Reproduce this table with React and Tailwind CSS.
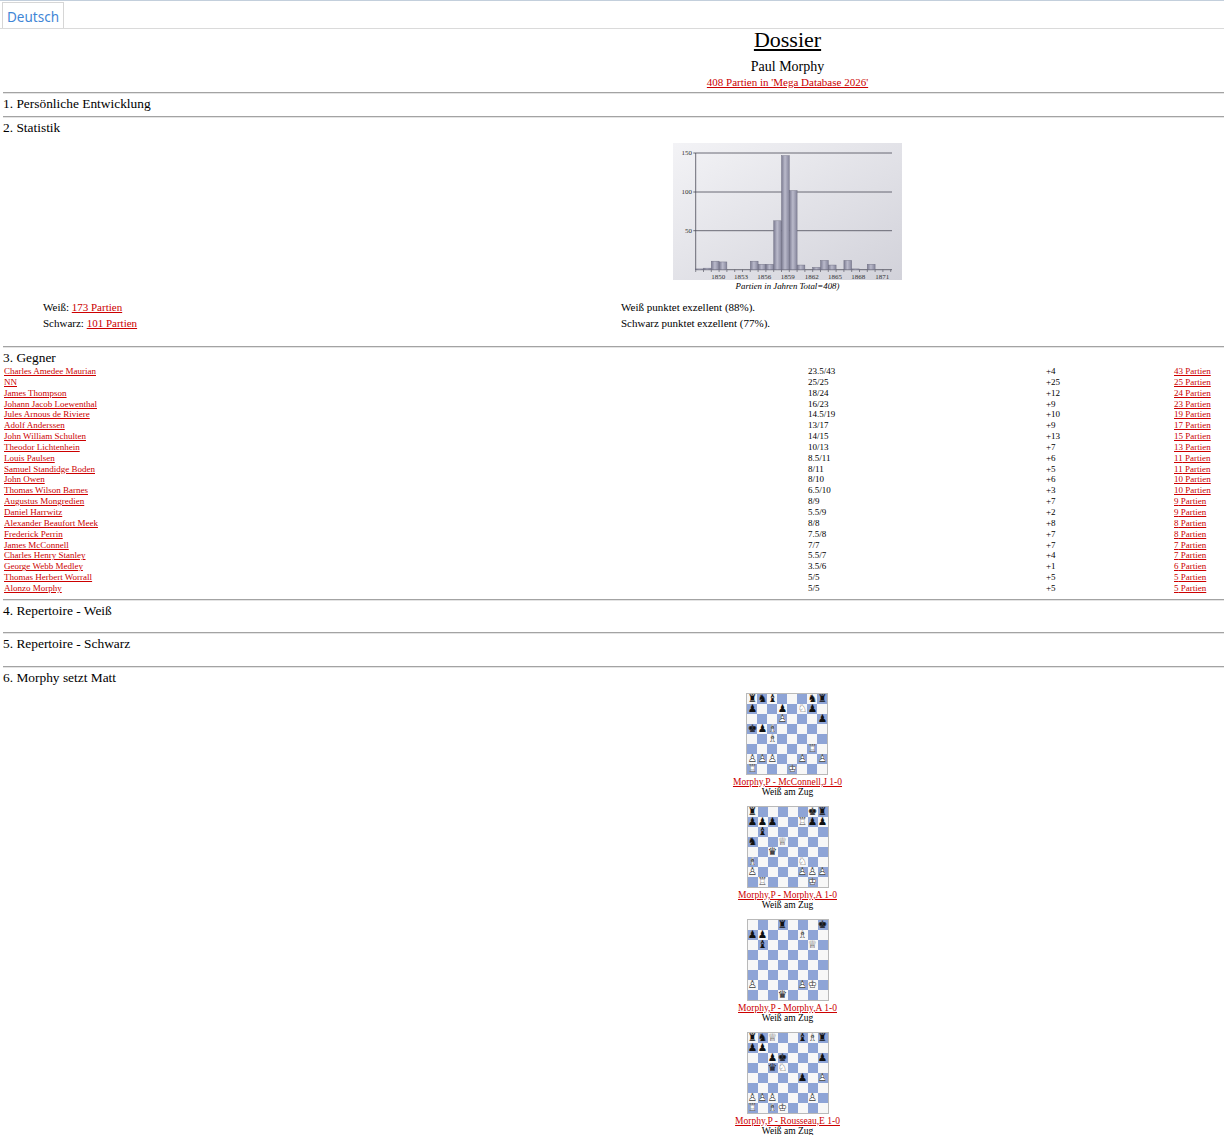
import React from 'react'

const serif = { fontFamily: '"Liberation Serif", "Times New Roman", serif' }

const opponents = [
  ['Charles Amedee Maurian', '23.5/43', '+4', 43],
  ['NN', '25/25', '+25', 25],
  ['James Thompson', '18/24', '+12', 24],
  ['Johann Jacob Loewenthal', '16/23', '+9', 23],
  ['Jules Arnous de Riviere', '14.5/19', '+10', 19],
  ['Adolf Anderssen', '13/17', '+9', 17],
  ['John William Schulten', '14/15', '+13', 15],
  ['Theodor Lichtenhein', '10/13', '+7', 13],
  ['Louis Paulsen', '8.5/11', '+6', 11],
  ['Samuel Standidge Boden', '8/11', '+5', 11],
  ['John Owen', '8/10', '+6', 10],
  ['Thomas Wilson Barnes', '6.5/10', '+3', 10],
  ['Augustus Mongredien', '8/9', '+7', 9],
  ['Daniel Harrwitz', '5.5/9', '+2', 9],
  ['Alexander Beaufort Meek', '8/8', '+8', 8],
  ['Frederick Perrin', '7.5/8', '+7', 8],
  ['James McConnell', '7/7', '+7', 7],
  ['Charles Henry Stanley', '5.5/7', '+4', 7],
  ['George Webb Medley', '3.5/6', '+1', 6],
  ['Thomas Herbert Worrall', '5/5', '+5', 5],
  ['Alonzo Morphy', '5/5', '+5', 5],
]

const puzzles = [
  { fen: 'rnb3nr/p2p1Np1/3P3p/kpB5/2B5/6R1/PPP2P1P/R3K3', game: 'Morphy,P - McConnell,J 1-0' },
  { fen: 'r5kr/ppp2Rpp/1b6/n2Q4/2q5/B4N2/P4PPP/1R4K1', game: 'Morphy,P - Morphy,A 1-0' },
  { fen: '3r3k/pp3B2/1b4Q1/8/8/8/P4PK1/3q4', game: 'Morphy,P - Morphy,A 1-0' },
  { fen: 'rnQ2bBr/pp6/2pk3p/2qN4/5p1P/8/PPP3P1/R1BK4', game: 'Morphy,P - Rousseau,E 1-0' },
]

// year slot index, number of games
const bars = [[0, 1], [1, 2], [2, 11], [3, 10], [7, 11], [8, 7], [9, 7], [10, 63], [11, 147], [12, 102], [13, 6], [15, 3], [16, 12], [17, 6], [19, 12], [20, 1], [22, 7]]
const years = [[45.3, '1850'], [68, '1853'], [91.3, '1856'], [114.7, '1859'], [138.7, '1862'], [162, '1865'], [185.3, '1868'], [209.3, '1871']]

const filled = { k: '♚', q: '♛', r: '♜', b: '♝', n: '♞', p: '♟' }
const outline = { k: '♔', q: '♕', r: '♖', b: '♗', n: '♘', p: '♙' }

function parseFen(fen) {
  return fen.split('/').map(row => {
    const cells = []
    for (const ch of row) {
      if (/\d/.test(ch)) for (let i = 0; i < +ch; i++) cells.push(null)
      else cells.push(ch)
    }
    return cells
  })
}

function Link({ children, className = '' }) {
  return <a href="#" className={`text-[#cc0000] underline ${className}`}>{children}</a>
}

function Rule() {
  return <div className="h-[2px] border-t border-[#a3a3a3] bg-[#e4e4e4]" />
}

function Heading({ children }) {
  return <div className="pt-[2px] text-[13.4px] leading-[16px]">{children}</div>
}

function Chart() {
  return (
    <svg width="229" height="137" viewBox="0 0 229 137">
      <defs>
        <linearGradient id="bg" x1="0" y1="0" x2="1" y2="1">
          <stop offset="0" stopColor="#f3f3f6" />
          <stop offset="1" stopColor="#d2d2da" />
        </linearGradient>
        <linearGradient id="bar" x1="0" y1="0" x2="1" y2="0">
          <stop offset="0" stopColor="#7c7c92" />
          <stop offset="0.45" stopColor="#babacb" />
          <stop offset="1" stopColor="#86869c" />
        </linearGradient>
      </defs>
      <rect width="229" height="137" fill="url(#bg)" />
      {[[10, '150'], [49, '100'], [87.7, '50']].map(([y, t]) => (
        <g key={t}>
          <line x1="20.3" x2="219" y1={y} y2={y} stroke="#4a4a55" strokeWidth="0.8" />
          <text x="19" y={y + 2.3} fontSize="7" textAnchor="end" fill="#333" fontFamily="Liberation Serif">{t}</text>
        </g>
      ))}
      <line x1="22.7" x2="22.7" y1="10" y2="127" stroke="#4a4a55" strokeWidth="0.8" />
      <line x1="22.7" x2="219" y1="126.7" y2="126.7" stroke="#4a4a55" strokeWidth="0.8" />
      {Array.from({ length: 26 }).map((_, i) => (
        <line key={i} x1={22.7 + 7.8 * i} x2={22.7 + 7.8 * i} y1="126.7" y2="129" stroke="#4a4a55" strokeWidth="0.6" />
      ))}
      {bars.map(([i, v]) => {
        const h = v * 0.776
        return <rect key={i} x={22.7 + 7.8 * i} y={126.7 - h} width="7.8" height={h} fill="url(#bar)" stroke="#66667a" strokeWidth="0.4" />
      })}
      {years.map(([x, t]) => (
        <text key={t} x={x} y="136" fontSize="7" textAnchor="middle" fill="#333" fontFamily="Liberation Serif">{t}</text>
      ))}
    </svg>
  )
}

function Board({ fen }) {
  const rows = parseFen(fen)
  return (
    <div className="border border-[#b9b9b9] grid grid-cols-[repeat(8,10px)] grid-rows-[repeat(8,10px)] w-[82px] h-[82px]">
      {rows.map((row, r) =>
        row.map((p, c) => {
          const light = (r + c) % 2 === 0
          const white = p && p === p.toUpperCase()
          const k = p && p.toLowerCase()
          return (
            <div
              key={`${r}-${c}`}
              className={`flex items-center justify-center overflow-hidden ${light ? 'bg-[#f7f7f7]' : 'bg-[#8ea4d6]'}`}
              style={{ fontFamily: '"DejaVu Sans", sans-serif' }}
            >
              {p && (white ? (
                <span className="grid text-[10.5px] leading-none">
                  <span className="col-start-1 row-start-1 text-white">{filled[k]}</span>
                  <span className="col-start-1 row-start-1 text-[#3a3a3a]">{outline[k]}</span>
                </span>
              ) : (
                <span className="text-[10.5px] leading-none text-[#111]">{filled[k]}</span>
              ))}
            </div>
          )
        })
      )}
    </div>
  )
}

export default function App() {
  return (
    <div className="w-full min-h-[1135px] overflow-hidden bg-white text-black" style={serif}>
      <div className="h-[1px] w-full bg-[#c3cfdc]" />
      {/* Language tab */}
      <div className="h-[28px] border-b border-[#dadada] flex items-end pl-[2px]">
        <div
          className="h-[26px] px-[4px] border border-b-0 border-[#d6d6d6] bg-white text-[13.5px] leading-[28px] text-[#3f86d6]"
          style={{ fontFamily: '"Noto Sans", "Open Sans", sans-serif' }}
        >
          Deutsch
        </div>
      </div>

      <div className="w-[1572px] pl-[3px]">
        {/* Title */}
        <div className="flex flex-col items-center">
          <div className="text-[22px] leading-[21px] underline">Dossier</div>
          <div className="mt-[9px] text-[14px] leading-[16px]">Paul Morphy</div>
          <Link className="mt-[1px] text-[11px] leading-[12px]">408 Partien in 'Mega Database 2026'</Link>
        </div>

        <div className="mt-[4px]"><Rule /></div>
        <Heading>1. Persönliche Entwicklung</Heading>
        <div className="mt-[4px]"><Rule /></div>
        <Heading>2. Statistik</Heading>

        <div className="mt-[7px] flex flex-col items-center">
          <Chart />
          <div className="text-[8.8px] leading-[10px] italic mt-[1px]">Partien in Jahren Total=408)</div>
        </div>

        <div className="mt-[8px] grid grid-cols-[618px_1fr] text-[11px] leading-[16px]">
          <div className="pl-[40px]">Weiß: <Link>173 Partien</Link></div>
          <div>Weiß punktet exzellent (88%).</div>
          <div className="pl-[40px]">Schwarz: <Link>101 Partien</Link></div>
          <div>Schwarz punktet exzellent (77%).</div>
        </div>

        <div className="mt-[15px]"><Rule /></div>
        <Heading>3. Gegner</Heading>
        <div className="pl-[1px] grid grid-cols-[804px_238px_128px_auto] text-[9px] leading-[10.85px]">
          {opponents.map(([name, score, diff, games]) => (
            <React.Fragment key={name}>
              <div><Link>{name}</Link></div>
              <div>{score}</div>
              <div>{diff}</div>
              <div><Link>{games} Partien</Link></div>
            </React.Fragment>
          ))}
        </div>

        <div className="mt-[5px]"><Rule /></div>
        <Heading>4. Repertoire - Weiß</Heading>
        <div className="mt-[13px]"><Rule /></div>
        <Heading>5. Repertoire - Schwarz</Heading>
        <div className="mt-[14px]"><Rule /></div>
        <Heading>6. Morphy setzt Matt</Heading>

        <div className="mt-[6px] flex flex-col items-center">
          {puzzles.map((p, i) => (
            <div key={i} className="flex flex-col items-center mb-[8px]">
              <div className="p-[1px]"><Board fen={p.fen} /></div>
              <Link className="mt-[1px] text-[9.5px] leading-[10px]">{p.game}</Link>
              <div className="text-[9.5px] leading-[10px]">Weiß am Zug</div>
            </div>
          ))}
        </div>
      </div>
    </div>
  )
}
